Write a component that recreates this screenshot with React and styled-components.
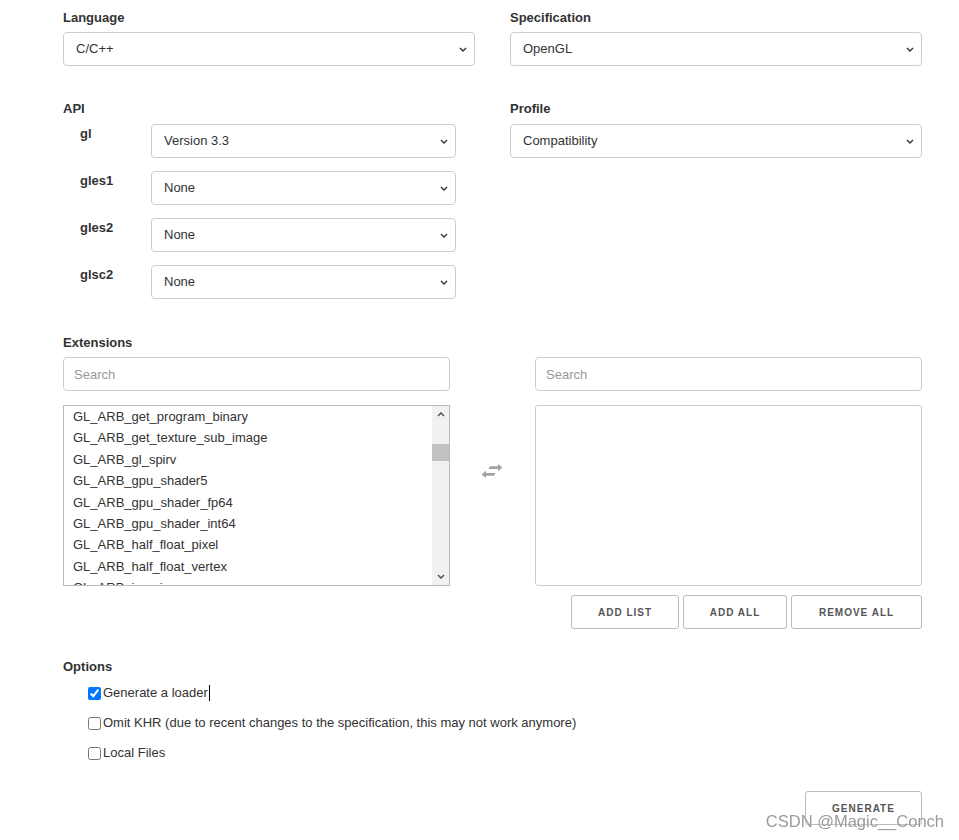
import React from "react";
import styled, { createGlobalStyle } from "styled-components";

const GlobalStyle = createGlobalStyle`
  html, body {
    margin: 0;
    padding: 0;
    background: #fff;
  }
  body {
    font-family: "Liberation Sans", Arial, sans-serif;
    font-size: 13px;
    color: #333;
  }
  * {
    box-sizing: border-box;
  }
`;

const Page = styled.div`
  width: 859px;
  margin-left: 63px;
  padding-top: 8px;
`;

const TopGrid = styled.div`
  display: grid;
  grid-template-columns: 412px 412px;
  column-gap: 35px;
  row-gap: 33px;
  align-items: start;
`;

const Field = styled.div`
  display: flex;
  flex-direction: column;
`;

const Label = styled.div`
  font-weight: bold;
  font-size: 13px;
  line-height: 18px;
  padding-top: 1px;
  color: #333;
  margin-bottom: ${(p) => (p.$tight ? 5 : 6)}px;
`;

const SelectWrap = styled.div`
  position: relative;
  width: ${(p) => p.$width || "100%"};
`;

const Select = styled.select`
  appearance: none;
  width: 100%;
  height: 34px;
  padding: 0 24px 1px 12px;
  border: 1px solid #ccc;
  border-radius: 4px;
  background: #fff;
  font-family: "Liberation Sans", Arial, sans-serif;
  font-size: 13px;
  color: #333;
  outline: none;
`;

const Chevron = styled.svg`
  position: absolute;
  right: 8px;
  top: 15px;
  pointer-events: none;
`;

const ApiRows = styled.div`
  display: flex;
  flex-direction: column;
  gap: 13px;
`;

const ApiRow = styled.div`
  display: flex;
  align-items: flex-start;
  padding-left: 17px;
`;

const ApiName = styled.div`
  width: 71px;
  font-weight: bold;
  line-height: 18px;
  padding-top: 1px;
`;

const Section = styled.div`
  margin-top: ${(p) => p.$top}px;
`;

const ExtGrid = styled.div`
  display: grid;
  grid-template-columns: 387px 85px 387px;
  grid-template-rows: 34px 181px 34px;
  row-gap: 14px;
`;

const SearchInput = styled.input`
  width: 100%;
  height: 34px;
  padding: 0 10px;
  border: 1px solid #ccc;
  border-radius: 4px;
  font-family: "Liberation Sans", Arial, sans-serif;
  font-size: 13px;
  color: #333;
  outline: none;
  &::placeholder {
    color: #999;
  }
`;

const ListBox = styled.div`
  display: flex;
  height: 181px;
  border: 1px solid ${(p) => (p.$empty ? "#ccc" : "#bbb")};
  border-radius: ${(p) => (p.$empty ? "3px" : "0")};
  background: #fff;
  overflow: hidden;
`;

const ListItems = styled.div`
  flex: 1;
  overflow: hidden;
`;

const ListItem = styled.div`
  padding-left: 9px;
  height: 21.4px;
  line-height: 21.4px;
  white-space: nowrap;
  color: #333;
`;

const ScrollTrack = styled.div`
  width: 17px;
  background: #f1f1f1;
  display: flex;
  flex-direction: column;
`;

const ScrollButton = styled.div`
  height: 17px;
  display: flex;
  align-items: center;
  justify-content: center;
`;

const ScrollThumb = styled.div`
  height: 17px;
  margin-top: ${(p) => p.$offset}px;
  background: #c1c1c1;
`;

const ScrollSpacer = styled.div`
  flex: 1;
`;

const SwapCell = styled.div`
  display: flex;
  justify-content: center;
  padding-top: 59px;
  padding-right: 2px;
`;

const ButtonRow = styled.div`
  grid-column: 3;
  display: flex;
  justify-content: flex-end;
  gap: 4px;
  margin-top: -5px;
`;

const Button = styled.button`
  width: ${(p) => p.$w}px;
  height: 34px;
  border: 1px solid #bbb;
  border-radius: 3px;
  background: #fff;
  font-family: "Liberation Sans", Arial, sans-serif;
  font-size: 10px;
  font-weight: bold;
  letter-spacing: 1px;
  color: #555;
  padding: 0;
`;

const OptionList = styled.div`
  display: flex;
  flex-direction: column;
  gap: 12px;
  padding-left: 25px;
  margin-top: 8px;
`;

const OptionRow = styled.label`
  display: flex;
  align-items: center;
  height: 18px;
  line-height: 18px;
  color: #333;
`;

const Check = styled.input`
  width: 13px;
  height: 13px;
  margin: 0 2px 0 0;
  accent-color: #0075ff;
`;

const Caret = styled.span`
  display: inline-block;
  width: 1px;
  height: 16px;
  background: #000;
  margin-left: 1px;
`;

const GenerateRow = styled.div`
  display: flex;
  justify-content: flex-end;
  margin-top: 29px;
`;

const Watermark = styled.div`
  position: fixed;
  right: 15px;
  bottom: 9px;
  font-family: "Liberation Sans", Arial, sans-serif;
  font-size: 16.5px;
  color: rgba(120, 120, 120, 0.75);
  text-shadow: 0 0 2px #fff;
  pointer-events: none;
`;

const visibleExtensions = [
  "GL_ARB_get_program_binary",
  "GL_ARB_get_texture_sub_image",
  "GL_ARB_gl_spirv",
  "GL_ARB_gpu_shader5",
  "GL_ARB_gpu_shader_fp64",
  "GL_ARB_gpu_shader_int64",
  "GL_ARB_half_float_pixel",
  "GL_ARB_half_float_vertex",
  "GL_ARB_imaging",
];

function ChevronDown() {
  return (
    <Chevron width="8" height="5" viewBox="0 0 8 5">
      <path d="M1 1l3 3 3-3" fill="none" stroke="#333" strokeWidth="1.4" />
    </Chevron>
  );
}

function Dropdown({ value, width }) {
  return (
    <SelectWrap $width={width}>
      <Select defaultValue={value}>
        <option>{value}</option>
      </Select>
      <ChevronDown />
    </SelectWrap>
  );
}

function ScrollArrow({ up }) {
  return (
    <svg width="8" height="5" viewBox="0 0 8 5">
      <path
        d={up ? "M1 4l3-3 3 3" : "M1 1l3 3 3-3"}
        fill="none"
        stroke="#505050"
        strokeWidth="1.5"
      />
    </svg>
  );
}

function SwapIcon() {
  return (
    <svg width="22" height="14" viewBox="0 0 22 14">
      <g fill="#a3a3a3">
        <path d="M9 2.2h8V0l4.5 3.6L17 7.2V5H7.4z" />
        <path d="M13 11.8H5V14L0.5 10.4 5 6.8V9h9.6z" />
      </g>
    </svg>
  );
}

const apis = [
  { name: "gl", value: "Version 3.3" },
  { name: "gles1", value: "None" },
  { name: "gles2", value: "None" },
  { name: "glsc2", value: "None" },
];

export default function App() {
  return (
    <>
      <GlobalStyle />
      <Page>
        <TopGrid>
          <Field>
            <Label $tight>Language</Label>
            <Dropdown value="C/C++" />
          </Field>
          <Field>
            <Label $tight>Specification</Label>
            <Dropdown value="OpenGL" />
          </Field>
          <Field>
            <Label>API</Label>
            <ApiRows>
              {apis.map((a) => (
                <ApiRow key={a.name}>
                  <ApiName>{a.name}</ApiName>
                  <Dropdown value={a.value} width="305px" />
                </ApiRow>
              ))}
            </ApiRows>
          </Field>
          <Field>
            <Label>Profile</Label>
            <Dropdown value="Compatibility" />
          </Field>
        </TopGrid>

        <Section $top={34}>
          <Label $tight>Extensions</Label>
          <ExtGrid>
            <SearchInput placeholder="Search" />
            <div />
            <SearchInput placeholder="Search" />
            <ListBox>
              <ListItems>
                {visibleExtensions.map((e) => (
                  <ListItem key={e}>{e}</ListItem>
                ))}
              </ListItems>
              <ScrollTrack>
                <ScrollButton>
                  <ScrollArrow up />
                </ScrollButton>
                <ScrollThumb $offset={21} />
                <ScrollSpacer />
                <ScrollButton>
                  <ScrollArrow />
                </ScrollButton>
              </ScrollTrack>
            </ListBox>
            <SwapCell>
              <SwapIcon />
            </SwapCell>
            <ListBox $empty />
            <ButtonRow>
              <Button $w={108}>ADD LIST</Button>
              <Button $w={104}>ADD ALL</Button>
              <Button $w={131}>REMOVE ALL</Button>
            </ButtonRow>
          </ExtGrid>
        </Section>

        <Section $top={23}>
          <Label $tight>Options</Label>
          <OptionList>
            <OptionRow>
              <Check type="checkbox" defaultChecked />
              Generate a loader
              <Caret />
            </OptionRow>
            <OptionRow>
              <Check type="checkbox" />
              Omit KHR (due to recent changes to the specification, this may not work anymore)
            </OptionRow>
            <OptionRow>
              <Check type="checkbox" />
              Local Files
            </OptionRow>
          </OptionList>
        </Section>

        <GenerateRow>
          <Button $w={117}>GENERATE</Button>
        </GenerateRow>
      </Page>
      <Watermark>CSDN @Magic__Conch</Watermark>
    </>
  );
}
